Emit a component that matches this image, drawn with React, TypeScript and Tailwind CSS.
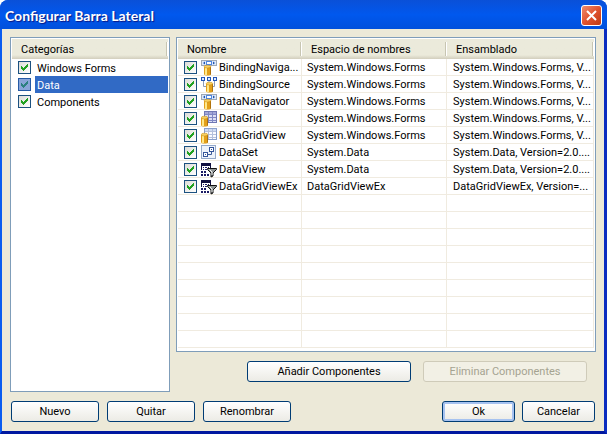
import { ReactNode } from "react";

function Check({ label, dim = false }: { label: string; dim?: boolean }) {
  return (
    <span className="grid size-[13px] shrink-0">
      <input
        type="checkbox"
        defaultChecked
        aria-label={label}
        className={
          "peer col-start-1 row-start-1 size-[13px] appearance-none border " +
          (dim
            ? "border-[#255aa5] bg-[#88a5d8]"
            : "border-[#1c5180] bg-linear-to-br from-[#dcdcd7] to-white")
        }
      />
      <svg
        viewBox="0 0 13 13"
        className={
          "pointer-events-none invisible col-start-1 row-start-1 size-[13px] peer-checked:visible " +
          (dim ? "text-[#2b8080]" : "text-[#21a121]")
        }
        shapeRendering="crispEdges"
        fill="currentColor"
      >
        <path d="M3 5h1v3H3zM4 6h1v3H4zM5 7h1v3H5zM6 6h1v3H6zM7 5h1v3H7zM8 4h1v3H8zM9 3h1v3H9z" />
      </svg>
    </span>
  );
}

function Icon({ children }: { children: ReactNode }) {
  return (
    <svg viewBox="0 0 16 16" className="size-4 shrink-0" aria-hidden="true">
      {children}
    </svg>
  );
}

function Cylinder({ x, y }: { x: number; y: number }) {
  return (
    <g transform={`translate(${x} ${y})`}>
      <path d="M0 1.500v7.500c0 2 7 2 7 0v-7.500z" fill="#e3a01a" />
      <path d="M1 2v8h2V2z" fill="#ffe88a" />
      <path d="M6 2v8l1-.8V2z" fill="#b0720c" />
      <ellipse cx="3.500" cy="1.600" rx="3.300" ry="1.400" fill="#f8d060" stroke="#c08818" strokeWidth=".5" />
    </g>
  );
}

function NavigatorIcon() {
  return (
    <Icon>
      <rect x=".5" y=".5" width="15" height="5" fill="#dbe8fa" stroke="#9fa8b4" />
      <path d="M4 1.500v3L2 3zM12 1.500v3l2-1.500z" fill="#1c50b0" />
      <rect x="5.500" y="1.500" width="5" height="3" fill="#fff" stroke="#4f86e0" />
      <Cylinder x={3} y={5} />
    </Icon>
  );
}

function SourceIcon() {
  return (
    <Icon>
      <path d="M2.500 4v5.500H5M13.500 4v5.500H10M8 4v2" fill="none" stroke="#8a9ab8" />
      <g fill="#dfeaff" stroke="#2356b8">
        <rect x=".5" y=".5" width="3" height="3" />
        <rect x="6.500" y=".5" width="3" height="3" />
        <rect x="12.500" y=".5" width="3" height="3" />
      </g>
      <Cylinder x={5} y={5} />
    </Icon>
  );
}

function GridIcon({ light = false }: { light?: boolean }) {
  return (
    <Icon>
      <rect x="3.500" y=".5" width="12" height="11" fill={light ? "#fafbff" : "#dcdff4"} stroke={light ? "#8aa0cc" : "#7078b4"} />
      <rect x="4" y="1" width="11" height="2" fill={light ? "#cfdcf4" : "#a4a8d8"} />
      <path d="M4 3.500h11M4 6.500h11M4 9.500h11M7.500 1v10M11.500 1v10" stroke={light ? "#b4c0dc" : "#8088c4"} />
      <Cylinder x={0} y={5} />
    </Icon>
  );
}

function DataSetIcon() {
  return (
    <Icon>
      <rect x=".5" y=".5" width="14" height="13" fill="#eef3fb" stroke="#94a9ca" />
      <path d="M6 9.500h4.500V6" fill="none" stroke="#3c5c98" />
      <rect x="8.500" y="2.500" width="4" height="4" fill="#fff" stroke="#33549a" />
      <rect x="2.500" y="7.500" width="4" height="4" fill="#fff" stroke="#33549a" />
      <path d="M10 4h1v1h-1zM4 9h1v1h-1z" fill="#33549a" />
    </Icon>
  );
}

function ViewIcon() {
  return (
    <Icon>
      <g shapeRendering="crispEdges">
        <path d="M0 1h10v13H0z" fill="#fff" />
        <path d="M0 1h10v3H0zM0 4h1v4H0zM9 4h1v2H9z" fill="#101040" />
        <path d="M2 5h1v1H2zM4 5h2v1H4zM7 5h1v1H7zM2 7h1v1H2zM4 7h2v1H4zM0 9h2v2H0zM3 9h2v2H3zM0 12h2v2H0zM3 12h2v2H3zM6 12h2v2H6z" fill="#1c1c64" />
      </g>
      <path d="M6.500 6.500h9v1l-3.500 3.500v3l-2 1v-4L6.500 7.500z" fill="#8e9494" stroke="#111" />
      <path d="M8.500 7.500l2.500 2.500v3" fill="none" stroke="#f4f4f4" />
    </Icon>
  );
}

const rows: { icon: ReactNode; name: string; space: string; assembly: string }[] = [
  { icon: <NavigatorIcon />, name: "BindingNaviga...", space: "System.Windows.Forms", assembly: "System.Windows.Forms, V..." },
  { icon: <SourceIcon />, name: "BindingSource", space: "System.Windows.Forms", assembly: "System.Windows.Forms, V..." },
  { icon: <NavigatorIcon />, name: "DataNavigator", space: "System.Windows.Forms", assembly: "System.Windows.Forms, V..." },
  { icon: <GridIcon />, name: "DataGrid", space: "System.Windows.Forms", assembly: "System.Windows.Forms, V..." },
  { icon: <GridIcon light />, name: "DataGridView", space: "System.Windows.Forms", assembly: "System.Windows.Forms, V..." },
  { icon: <DataSetIcon />, name: "DataSet", space: "System.Data", assembly: "System.Data, Version=2.0...." },
  { icon: <ViewIcon />, name: "DataView", space: "System.Data", assembly: "System.Data, Version=2.0...." },
  { icon: <ViewIcon />, name: "DataGridViewEx", space: "DataGridViewEx", assembly: "DataGridViewEx, Version=..." },
];

const emptyRows = Array.from({ length: 9 }, (_, i) => i);

function Button({ children, className = "", disabled = false, primary = false }: { children: ReactNode; className?: string; disabled?: boolean; primary?: boolean }) {
  return (
    <button
      type="button"
      disabled={disabled}
      className={
        "h-[21px] rounded-[3px] border text-center leading-5 whitespace-nowrap " +
        (disabled
          ? "border-[#cfcbb9] bg-[#f2f0e5] text-[#a5a391] "
          : primary
            ? "border-[#003c74] bg-linear-to-b from-white to-[#ecebe5] text-black shadow-[inset_0_0_0_2px_#a6c2f0] "
            : "border-[#003c74] bg-linear-to-b from-white to-[#ecebe5] text-black ") +
        className
      }
    >
      {children}
    </button>
  );
}

const headerBar = "bg-linear-to-b from-[#ebeadb] from-80% to-[#d2cebd]";

function HeaderCell({ children }: { children: ReactNode }) {
  return (
    <th scope="col" className="h-5 p-0 text-left font-normal">
      <div className="flex h-5 items-center justify-between pl-[9px]">
        <span className="pt-px">{children}</span>
        <span className="h-3.5 w-0.5 border-r border-l border-l-[#c7c5b2] border-r-white" />
      </div>
    </th>
  );
}

const gridCell = "h-[17px] border-r border-b border-[#f0ebe0] p-0 whitespace-nowrap";

export default function App() {
  return (
    <div className="flex min-h-screen flex-col rounded-t-lg bg-[#0058e6] font-['Roboto','Liberation_Sans',sans-serif] text-[11px] leading-4 text-black">
      <header className="flex h-[29px] items-center justify-between rounded-t-lg bg-linear-to-b from-[#0a50d8] via-[#0058ee] to-[#0050dc] pr-[5px] pl-[5px]">
        <h1 className="pt-0.5 font-['Lato','Open_Sans',sans-serif] text-[14px] font-bold text-white [text-shadow:1px_1px_1px_#0a1883]">
          Configurar Barra Lateral
        </h1>
        <button
          type="button"
          aria-label="Cerrar"
          className="mt-0.5 flex size-[21px] items-center justify-center rounded-[3px] border border-white bg-linear-to-br from-[#ee8a6c] via-[#e0532f] to-[#c03a10]"
        >
          <svg viewBox="0 0 13 13" className="size-[13px]" stroke="#fff" strokeWidth="2">
            <path d="M2 2l9 9M11 2l-9 9" />
          </svg>
        </button>
      </header>

      <main className="flex flex-1 flex-col border-r-[3px] border-b-[3px] border-l-2 border-r-[#0a2cc0] border-b-[#0018a0] border-l-[#0a5cf0] bg-[#ece9d8] px-2 pt-2 pb-[9px]">
        <div className="flex flex-1 gap-1.5">
          <section className="w-40 border border-[#7f9db9] bg-white p-px">
            <div className={"flex h-5 items-center justify-between pl-[9px] " + headerBar}>
              <span className="pt-px">Categorías</span>
              <span className="h-3.5 w-0.5 border-r border-l border-l-[#c7c5b2] border-r-white" />
            </div>
            <ul>
              {["Windows Forms", "Data", "Components"].map((name) => {
                const selected = name === "Data";
                return (
                  <li key={name} className="flex h-[17px] items-center gap-1 pl-1.5">
                    <Check label={name} dim={selected} />
                    <span className={"h-[17px] flex-1 pl-0.5 leading-[19px] " + (selected ? "bg-[#316ac5] text-white" : "")}>
                      {name}
                    </span>
                  </li>
                );
              })}
            </ul>
          </section>

          <section className="flex min-w-0 flex-1 flex-col">
            <div className="flex-1 border border-[#7f9db9] bg-white p-px">
              <table className="w-full table-fixed border-separate border-spacing-0">
                <colgroup>
                  <col className="w-[124px]" />
                  <col className="w-[145px]" />
                  <col />
                </colgroup>
                <thead className={headerBar}>
                  <tr>
                    <HeaderCell>Nombre</HeaderCell>
                    <HeaderCell>Espacio de nombres</HeaderCell>
                    <HeaderCell>Ensamblado</HeaderCell>
                  </tr>
                </thead>
                <tbody>
                  {rows.map((row) => (
                    <tr key={row.name}>
                      <td className={gridCell}>
                        <div className="flex h-4 items-center pl-1.5">
                          <Check label={row.name} />
                          <span className="ml-1 flex pt-0.5">{row.icon}</span>
                          <span className="ml-0.5 pt-0.5">{row.name}</span>
                        </div>
                      </td>
                      <td className={gridCell}>
                        <div className="flex h-4 items-center pl-[5px]">
                          <span className="pt-0.5">{row.space}</span>
                        </div>
                      </td>
                      <td className={gridCell}>
                        <div className="flex h-4 items-center pl-1.5">
                          <span className="pt-0.5">{row.assembly}</span>
                        </div>
                      </td>
                    </tr>
                  ))}
                  {emptyRows.map((i) => (
                    <tr key={i}>
                      <td className={gridCell} />
                      <td className={gridCell} />
                      <td className={gridCell} />
                    </tr>
                  ))}
                </tbody>
              </table>
            </div>
            <div className="mt-[9px] mb-[10px] flex justify-end gap-3 pr-[9px]">
              <Button className="w-[164px]">Añadir Componentes</Button>
              <Button className="w-[164px]" disabled>
                Eliminar Componentes
              </Button>
            </div>
          </section>
        </div>

        <footer className="mt-[9px] flex justify-between px-px">
          <div className="flex gap-2">
            <Button className="w-[88px]">Nuevo</Button>
            <Button className="w-[88px]">Quitar</Button>
            <Button className="w-[88px]">Renombrar</Button>
          </div>
          <div className="flex gap-[7px]">
            <Button className="w-[73px]" primary>
              Ok
            </Button>
            <Button className="w-[73px]">Cancelar</Button>
          </div>
        </footer>
      </main>
    </div>
  );
}
